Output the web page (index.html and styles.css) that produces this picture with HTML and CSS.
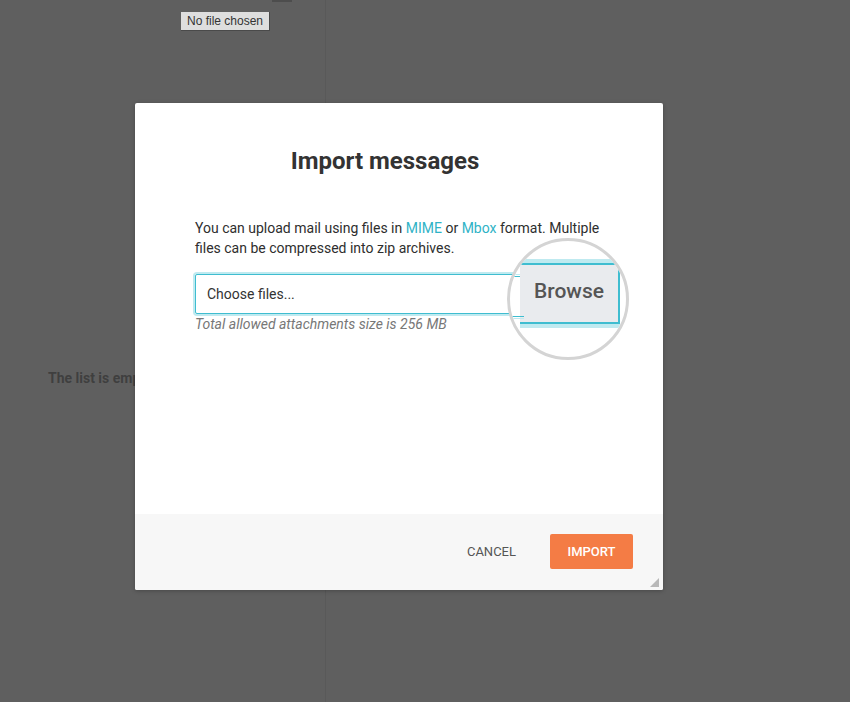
FILE: index.html
```html
<!DOCTYPE html>
<html lang="en">
<head>
    <meta charset="utf-8">
    <title>Import messages</title>
    <link rel="stylesheet" href="styles.css">
</head>
<body>
    <div class="page">
        <div class="sidebar">
            <div class="sidebar-top"><span class="toolbar-mark"></span></div>
            <div class="empty-list">The list is empty</div>
        </div>
        <div class="main"></div>
    </div>

    <div class="file-tip">No file chosen</div>

    <div class="modal">
        <div class="modal-body">
            <h1 class="modal-title">Import messages</h1>
            <p class="modal-text">You can upload mail using files in <a href="#">MIME</a> or <a href="#">Mbox</a> format. Multiple files can be compressed into zip archives.</p>
            <div class="file-field">
                <div class="file-input">
                    <span>Choose files...</span>
                    <span class="file-browse">Browse</span>
                </div>
                <div class="file-hint">Total allowed attachments size is 256 MB</div>
                <div class="magnifier">
                    <div class="magnifier-button">Browse</div>
                </div>
            </div>
        </div>
        <div class="modal-footer">
            <button class="btn btn-cancel">Cancel</button>
            <button class="btn btn-import">Import</button>
        </div>
        <span class="resize-handle"></span>
    </div>
</body>
</html>
```

FILE: styles.css
```css
html, body {
    margin: 0;
    padding: 0;
    width: 100%;
    height: 100%;
    overflow: hidden;
}
body {
    background: #5f5f5f;
    font-family: Roboto, "Liberation Sans", Arial, sans-serif;
    color: #333;
}
.page {
    display: flex;
    height: 100%;
}
.sidebar {
    width: 325px;
    border-right: 1px solid #595959;
    display: flex;
    flex-direction: column;
}
.sidebar-top {
    height: 360px;
    padding-left: 272px;
}
.toolbar-mark {
    display: block;
    width: 20px;
    height: 2px;
    background: #4d4d4d;
}
.empty-list {
    padding-left: 48px;
    font-size: 14px;
    font-weight: bold;
    line-height: 36px;
    color: #3f3f3f;
}
.main {
    flex: 1;
}
.file-tip {
    position: absolute;
    top: 12px;
    left: 181px;
    height: 18px;
    padding: 0 6px;
    background: #dedede;
    border-right: 1px solid #4a4a4a;
    border-bottom: 1px solid #4a4a4a;
    font-family: "Liberation Sans", Arial, sans-serif;
    font-size: 12px;
    line-height: 18px;
    color: #333;
}
.modal {
    position: absolute;
    top: 103px;
    left: 135px;
    width: 528px;
    height: 487px;
    background: #fff;
    border-radius: 2px;
    box-shadow: 0 1px 4px rgba(0, 0, 0, 0.25);
    display: flex;
    flex-direction: column;
}
.modal-body {
    flex: 1;
    padding: 44px 60px 0;
}
.modal-title {
    margin: 0 0 43px;
    padding-right: 28px;
    text-align: center;
    font-size: 24px;
    font-weight: bold;
    line-height: 28px;
    color: #333;
}
.modal-text {
    margin: 0 0 16px;
    font-size: 14px;
    line-height: 20px;
    color: #2e2e2e;
}
.modal-text a {
    color: #2fb3c6;
    text-decoration: none;
}
.file-field {
    position: relative;
}
.file-input {
    display: flex;
    justify-content: space-between;
    align-items: center;
    height: 38px;
    padding-left: 11px;
    border: 1px solid #3fbdd0;
    border-radius: 2px;
    box-shadow: 0 0 0 2px #bfeaf0;
    font-size: 14px;
    color: #333;
}
.file-browse {
    align-self: stretch;
    display: flex;
    align-items: center;
    padding: 0 12px;
    background: #e9ebee;
    color: #555;
}
.file-hint {
    margin-top: 1px;
    font-size: 14px;
    font-style: italic;
    line-height: 18px;
    color: #777;
}
.magnifier {
    position: absolute;
    top: -36px;
    left: 312px;
    width: 116px;
    height: 116px;
    border: 3px solid #d4d4d4;
    border-radius: 50%;
    background: #fff;
    overflow: hidden;
}
.magnifier::before,
.magnifier::after {
    content: "";
    position: absolute;
    left: 0;
    width: 14px;
    height: 1px;
    background: #3fbdd0;
    box-shadow: 0 -2px 0 #bfeaf0;
}
.magnifier::before {
    top: 35px;
}
.magnifier::after {
    top: 75px;
    box-shadow: 0 2px 0 #bfeaf0;
}
.magnifier-button {
    position: absolute;
    top: 22px;
    left: 10px;
    width: 100px;
    height: 61px;
    box-sizing: border-box;
    padding-bottom: 6px;
    background: #e9ebee;
    border-top: 2px solid #3fbdd0;
    border-right: 2px solid #3fbdd0;
    border-bottom: 2px solid #3fbdd0;
    box-shadow: 0 -4px 0 #bfeaf0, 0 4px 0 #bfeaf0;
    display: flex;
    align-items: center;
    justify-content: center;
    font-size: 21px;
    font-weight: 500;
    color: #555;
}
.modal-footer {
    height: 76px;
    background: #f7f7f7;
    display: flex;
    justify-content: flex-end;
    align-items: center;
    gap: 18px;
    padding: 0 30px 1px 0;
    box-sizing: border-box;
    border-radius: 0 0 2px 2px;
}
.btn {
    height: 35px;
    border: none;
    border-radius: 2px;
    font-family: Roboto, "Liberation Sans", Arial, sans-serif;
    font-size: 13px;
    text-transform: uppercase;
    cursor: pointer;
}
.btn-cancel {
    padding: 0 16px;
    background: transparent;
    color: #555;
}
.btn-import {
    width: 83px;
    background: #f47c45;
    color: #fff;
    font-weight: 500;
}
.resize-handle {
    position: absolute;
    right: 4px;
    bottom: 3px;
    width: 0;
    height: 0;
    border-left: 9px solid transparent;
    border-bottom: 9px solid #b8b8b8;
}
```
